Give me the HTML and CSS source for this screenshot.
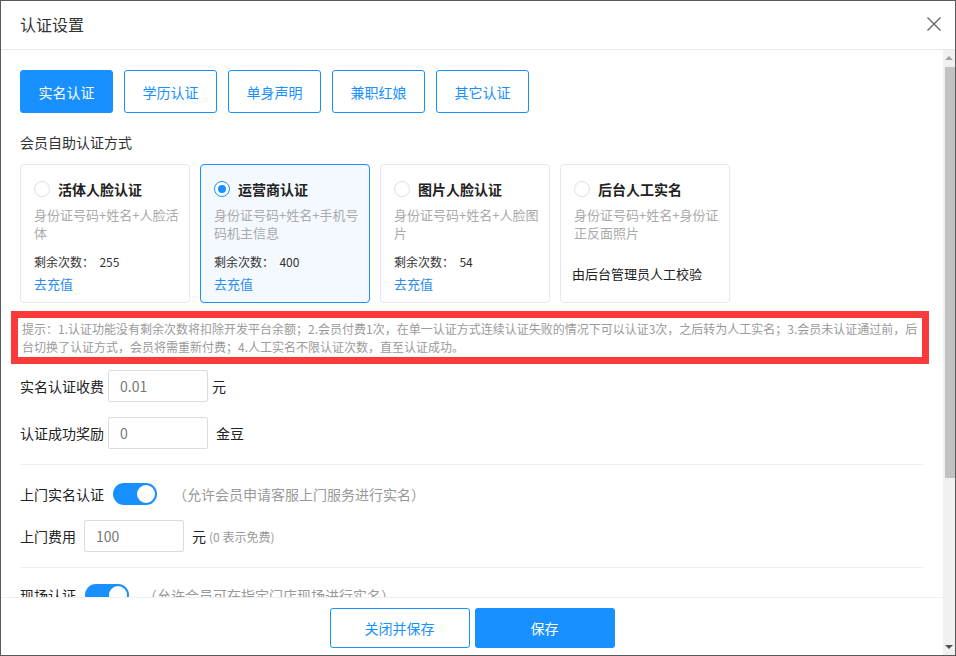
FILE: index.html
```html
<!DOCTYPE html>
<html lang="zh-CN">
<head>
<meta charset="utf-8">
<title>认证设置</title>
<link rel="stylesheet" href="styles.css">
</head>
<body>
<div class="window">
  <div class="header">
    <div class="title">认证设置</div>
    <svg class="close" width="16" height="16" viewBox="0 0 16 16"><path d="M1.5 1.5 L14.5 14.5 M14.5 1.5 L1.5 14.5" stroke="#666" stroke-width="1.4" fill="none"/></svg>
  </div>
  <div class="body">
    <div class="main">
      <div class="content">
        <div class="tabs">
          <div class="tab active">实名认证</div>
          <div class="tab">学历认证</div>
          <div class="tab">单身声明</div>
          <div class="tab">兼职红娘</div>
          <div class="tab">其它认证</div>
        </div>
        <div class="section-label">会员自助认证方式</div>
        <div class="cards">
          <div class="card">
            <div class="card-title"><span class="radio"></span>活体人脸认证</div>
            <div class="card-desc">身份证号码+姓名+人脸活体</div>
            <div class="card-count">剩余次数：&nbsp;&nbsp;255</div>
            <div class="card-link">去充值</div>
          </div>
          <div class="card selected">
            <div class="card-title"><span class="radio checked"></span>运营商认证</div>
            <div class="card-desc">身份证号码+姓名+手机号码机主信息</div>
            <div class="card-count">剩余次数：&nbsp;&nbsp;400</div>
            <div class="card-link">去充值</div>
          </div>
          <div class="card">
            <div class="card-title"><span class="radio"></span>图片人脸认证</div>
            <div class="card-desc">身份证号码+姓名+人脸图片</div>
            <div class="card-count">剩余次数：&nbsp;&nbsp;54</div>
            <div class="card-link">去充值</div>
          </div>
          <div class="card">
            <div class="card-title"><span class="radio"></span>后台人工实名</div>
            <div class="card-desc">身份证号码+姓名+身份证正反面照片</div>
            <div class="card-note">由后台管理员人工校验</div>
          </div>
        </div>
        <div class="hint">提示：1.认证功能没有剩余次数将扣除开发平台余额；2.会员付费1次，在单一认证方式连续认证失败的情况下可以认证3次，之后转为人工实名；3.会员未认证通过前，后<br>台切换了认证方式，会员将需重新付费；4.人工实名不限认证次数，直至认证成功。</div>
        <div class="row row-first">
          <span class="label">实名认证收费</span>
          <div class="input">0.01</div>
          <span class="unit">元</span>
        </div>
        <div class="row row-gap">
          <span class="label">认证成功奖励</span>
          <div class="input">0</div>
          <span class="unit unit-wide">金豆</span>
        </div>
        <div class="divider"></div>
        <div class="row row-toggle">
          <span class="label">上门实名认证</span>
          <span class="toggle"><span class="knob"></span></span>
          <span class="muted">（允许会员申请客服上门服务进行实名）</span>
        </div>
        <div class="row row-fee">
          <span class="label">上门费用</span>
          <div class="input input-fee">100</div>
          <span class="unit unit-wide">元</span>
          <span class="small-muted">(0 表示免费)</span>
        </div>
        <div class="divider"></div>
        <div class="row row-last">
          <span class="label">现场认证</span>
          <span class="toggle"><span class="knob"></span></span>
          <span class="muted">（允许会员可在指定门店现场进行实名）</span>
        </div>
      </div>
      <div class="footer">
        <div class="btn btn-outline">关闭并保存</div>
        <div class="btn btn-primary">保存</div>
      </div>
    </div>
    <div class="scrollbar">
      <div class="arrow-up"></div>
      <div class="thumb"></div>
      <div class="track-rest"></div>
      <div class="arrow-down"></div>
    </div>
  </div>
</div>
</body>
</html>
```
FILE: styles.css
```css
* { box-sizing: border-box; }
html, body { margin: 0; padding: 0; background: #fff; }
body {
  font-family: "Noto Sans CJK SC", "Noto Sans", sans-serif;
  color: #333;
}
.window {
  width: 956px;
  height: 656px;
  border: 1px solid #5a5a5a;
  display: flex;
  flex-direction: column;
  overflow: hidden;
  background: #fff;
}
.header {
  height: 49px;
  flex: none;
  border-bottom: 1px solid #e8e8e8;
  display: flex;
  align-items: center;
  justify-content: space-between;
  padding: 0 13px 0 19px;
}
.title { font-size: 16px; line-height: 20px; color: #333; margin-top: -2px; }
.close { display: block; margin-top: -3px; }
.body {
  flex: 1;
  display: flex;
  min-height: 0;
}
.main {
  flex: 1;
  display: flex;
  flex-direction: column;
  min-width: 0;
}
.content {
  flex: 1;
  overflow: hidden;
  padding: 20px 20px 0 19px;
  min-height: 0;
}
.tabs { display: flex; gap: 11px; }
.tab {
  width: 93px;
  height: 43px;
  border: 1px solid #1890ff;
  border-radius: 3px;
  color: #1890ff;
  font-size: 14px;
  display: flex;
  align-items: center;
  justify-content: center;
}
.tab.active { background: #1890ff; color: #fff; }
.section-label {
  font-size: 14px;
  line-height: 20px;
  margin-top: 19px;
  color: #333;
}
.cards { display: flex; gap: 10px; margin-top: 12px; }
.card {
  width: 170px;
  height: 139px;
  border: 1px solid #e4e7ed;
  border-radius: 4px;
  padding: 14px 10px 0 13px;
  background: #fff;
}
.card.selected { border-color: #1890ff; background: #f4f9ff; }
.card-title {
  display: flex;
  align-items: center;
  font-size: 14px;
  font-weight: bold;
  line-height: 20px;
  color: #222;
}
.radio {
  width: 16px;
  height: 16px;
  border: 1px solid #dcdfe6;
  border-radius: 50%;
  background: #fff;
  margin-right: 8px;
  flex: none;
  display: flex;
  align-items: center;
  justify-content: center;
}
.radio.checked { border-color: #1890ff; }
.radio.checked::after {
  content: "";
  width: 8px;
  height: 8px;
  border-radius: 50%;
  background: #1890ff;
}
.card-desc {
  margin-top: 7px;
  font-size: 13px;
  line-height: 18px;
  color: #aaa;
  height: 36px;
}
.card-count { margin-top: 11px; font-size: 12px; line-height: 18px; color: #333; }
.card-link { margin-top: 4px; font-size: 13px; line-height: 18px; color: #2d8cf0; }
.card-note { margin-top: 23px; font-size: 13px; line-height: 18px; color: #222; margin-left: -2px; }
.hint {
  margin: 8px -6px 0 -9px;
  border: 7px solid #fc3a3a;
  padding: 2px 3px 1px 4px;
  font-size: 12px;
  line-height: 18px;
  color: #9a9a9a;
  white-space: nowrap;
}
.row { display: flex; align-items: center; height: 32px; font-size: 14px; }
.row-first { margin-top: 6px; }
.row-gap { margin-top: 15px; }
.row-toggle { margin-top: 13px; }
.row-fee { margin-top: 10px; }
.row-last { margin-top: 11px; }
.label { color: #222; margin-right: 4px; line-height: 20px; }
.input {
  width: 100px;
  height: 32px;
  border: 1px solid #dcdcdc;
  border-radius: 2px;
  padding-left: 11px;
  display: flex;
  align-items: center;
  color: #777;
  font-size: 14px;
}
.input-fee { margin-left: 4px; }
.unit { margin-left: 4px; color: #222; }
.unit-wide { margin-left: 8px; }
.small-muted { font-size: 12px; color: #999; margin-left: 3px; }
.divider { height: 1px; background: #efefef; margin-top: 15px; }
.toggle {
  width: 44px;
  height: 22px;
  border-radius: 11px;
  background: #1890ff;
  display: flex;
  align-items: center;
  justify-content: flex-end;
  padding-right: 2px;
  margin-left: 5px;
}
.knob { width: 18px; height: 18px; border-radius: 50%; background: #fff; }
.muted { color: #999; margin-left: 16px; }
.row-last .muted { margin-left: 14px; }
.footer {
  height: 58px;
  flex: none;
  border-top: 1px solid #eeeeee;
  display: flex;
  justify-content: center;
  align-items: flex-start;
  gap: 5px;
  padding-top: 10px;
  background: #fff;
}
.btn {
  width: 140px;
  height: 40px;
  border-radius: 3px;
  font-size: 14px;
  display: flex;
  align-items: center;
  justify-content: center;
}
.btn-outline { border: 1px solid #1890ff; color: #1890ff; background: #fff; }
.btn-primary { background: #1890ff; color: #fff; }
.scrollbar {
  width: 12px;
  flex: none;
  background: #f0f0f0;
  display: flex;
  flex-direction: column;
  align-items: flex-end;
}
.arrow-up {
  height: 17px;
  width: 12px;
  display: flex;
  justify-content: center;
  padding-top: 6px;
}
.arrow-up::before {
  content: "";
  border-left: 4px solid transparent;
  border-right: 4px solid transparent;
  border-bottom: 4px solid #a3a3a3;
  height: 0;
}
.thumb { width: 10px; height: 411px; background: #c1c1c1; }
.track-rest { flex: 1; }
.arrow-down {
  height: 14px;
  width: 12px;
  display: flex;
  justify-content: center;
  padding-top: 4px;
}
.arrow-down::before {
  content: "";
  border-left: 4px solid transparent;
  border-right: 4px solid transparent;
  border-top: 4px solid #505050;
  height: 0;
}
```
